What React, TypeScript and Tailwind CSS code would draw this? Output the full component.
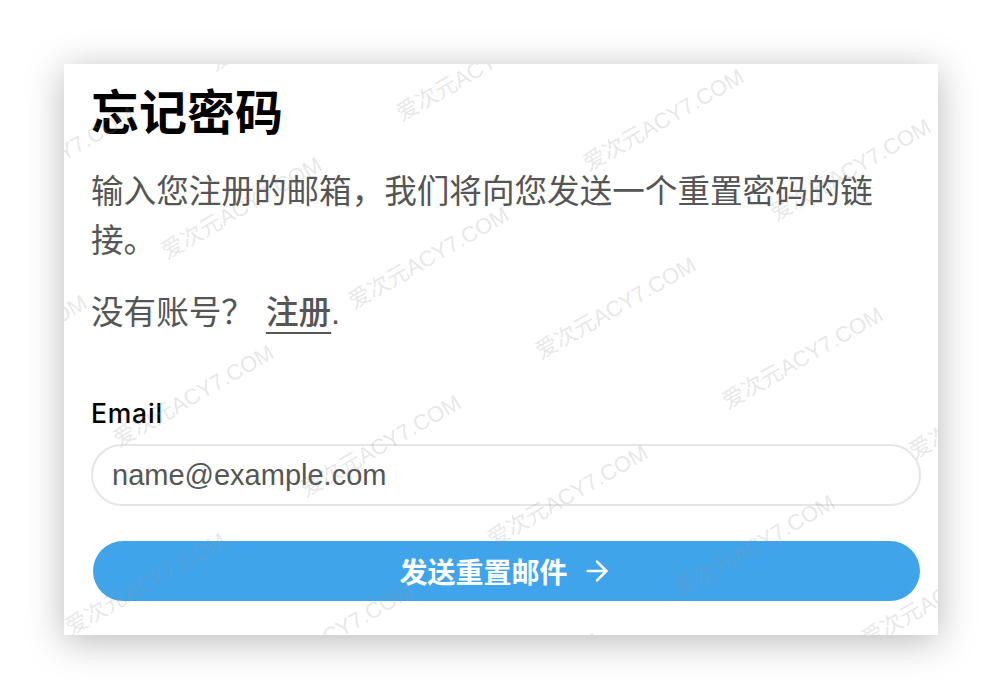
import { ArrowRight } from "lucide-react";

const marks: { x: number; y: number }[] = [];
for (let i = -3; i <= 6; i++) {
  for (let j = -2; j <= 4; j++) {
    const x = 105 + 187 * i - 48 * j;
    const y = 199 + 50 * i + 188 * j;
    if (x > -240 && x < 900 && y > -10 && y < 800) marks.push({ x, y });
  }
}

function Watermark() {
  return (
    <div className="pointer-events-none absolute inset-0 overflow-hidden" aria-hidden>
      {marks.map((m, k) => (
        <span
          key={k}
          className="absolute origin-bottom-left -rotate-[30deg] whitespace-nowrap font-['Liberation_Sans','Noto_Sans_CJK_SC',sans-serif] text-[22px] leading-none text-[rgba(150,150,150,0.24)]"
          style={{ left: m.x, top: m.y - 22 }}
        >
          爱次元ACY7.COM
        </span>
      ))}
    </div>
  );
}

export default function App() {
  return (
    <div className="min-h-[700px] bg-white pl-[64px] pt-[64px]">
      <div className="relative h-[571px] w-[874px] bg-white pl-[27px] pr-[17px] pt-[17px] shadow-[0_6px_36px_rgba(0,0,0,0.28)]">
        <h1 className="font-['Noto_Sans_CJK_SC',sans-serif] text-[48px] font-bold leading-[56px] text-black">
          忘记密码
        </h1>
        <p className="mt-[30px] font-['Liberation_Sans','Noto_Sans_CJK_SC',sans-serif] text-[32.6px] leading-[49px] text-[#555]">
          输入您注册的邮箱，我们将向您发送一个重置密码的链接。
        </p>
        <p className="mt-[23px] font-['Liberation_Sans','Noto_Sans_CJK_SC',sans-serif] text-[32.6px] leading-[49px] text-[#555]">
          没有账号？
          <a
            href="#"
            className="ml-[12px] font-medium text-[#555] underline decoration-2 underline-offset-[8px]"
          >
            注册
          </a>
          .
        </p>
        <label
          htmlFor="email"
          className="mt-[60px] block font-['Inter',sans-serif] text-[26.5px] font-medium leading-[32px] tracking-[0.8px] text-black"
        >
          Email
        </label>
        <input
          id="email"
          type="email"
          placeholder="name@example.com"
          className="mt-[15px] block h-[62px] w-full rounded-full border-2 border-[#e6e6e6] bg-transparent pl-[19px] font-['Liberation_Sans',sans-serif] text-[29px] text-[#555] outline-none placeholder:text-[#555]"
        />
        <button
          type="button"
          className="mx-auto mt-[35px] flex h-[60px] w-[827px] items-center justify-center gap-[13px] rounded-full bg-[#40a4ea] font-['Noto_Sans_CJK_SC',sans-serif] text-[28px] font-bold text-white"
        >
          发送重置邮件
          <ArrowRight size={32} strokeWidth={1.9} />
        </button>
        <Watermark />
      </div>
    </div>
  );
}
